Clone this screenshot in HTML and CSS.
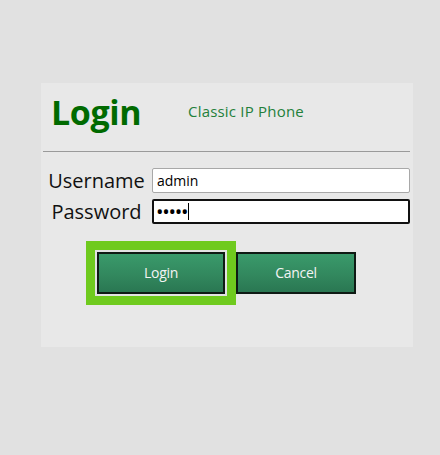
FILE: index.html
```html
<!DOCTYPE html>
<html>
<head>
<meta charset="utf-8">
<link rel="stylesheet" href="styles.css">
</head>
<body>
<div class="panel">
  <div class="head">
    <h1 class="title">Login</h1>
    <span class="sub">Classic IP Phone</span>
  </div>
  <hr class="rule">
  <div class="form">
    <label class="lbl" for="u">Username</label>
    <input class="field" id="u" type="text" value="admin">
    <label class="lbl" for="p">Password</label>
    <div class="field field-focus"><span class="dots">&#8226;&#8226;&#8226;&#8226;&#8226;</span><span class="caret"></span></div>
  </div>
  <div class="actions">
    <button class="btn btn-focus">Login</button>
    <button class="btn">Cancel</button>
  </div>
</div>
</body>
</html>
```
FILE: styles.css
```css
html, body {
  margin: 0;
  padding: 0;
  background: #e1e1e1;
  width: 440px;
  height: 455px;
  overflow: hidden;
}
.panel {
  margin: 83px 0 0 41px;
  width: 372px;
  height: 264px;
  background: #e8e8e8;
  box-sizing: border-box;
  font-family: "Open Sans", "Noto Sans", sans-serif;
}
.head {
  display: flex;
  align-items: flex-start;
  padding: 6px 0 0 10px;
  height: 60px;
  box-sizing: border-box;
}
.title {
  margin: 0;
  font-size: 34px;
  font-weight: 700;
  color: #006a00;
  letter-spacing: -0.4px;
  width: 137px;
  line-height: 46px;
}
.sub {
  font-size: 15px;
  line-height: 20px;
  margin-top: 12px;
  color: #23803a;
  letter-spacing: 0.2px;
}
.rule {
  margin: 8px 3px 0 2px;
  border: 0;
  border-top: 1px solid #9a9a9a;
  height: 0;
}
.form {
  display: grid;
  grid-template-columns: 103px 258px;
  column-gap: 4px;
  grid-auto-rows: 25px;
  row-gap: 6px;
  align-items: center;
  margin-top: 16px;
  padding-left: 4px;
}
.lbl {
  text-align: center;
  font-size: 20px;
  color: #111;
  line-height: 25px;
}
.field {
  box-sizing: border-box;
  width: 258px;
  height: 25px;
  margin: 0;
  border: 1px solid #a8a8a8;
  border-radius: 2px;
  background: #fff;
  font-family: "Open Sans", "Noto Sans", sans-serif;
  font-size: 14px;
  padding: 0 0 0 4px;
  color: #000;
  outline: none;
}
.field-focus {
  border: 2px solid #111;
  display: flex;
  align-items: center;
  padding-left: 2px;
}
.dots {
  font-size: 20px;
  letter-spacing: -1.3px;
  line-height: 1;
}
.caret {
  display: inline-block;
  width: 1px;
  height: 17px;
  background: #000;
  margin-left: 1px;
}
.actions {
  display: flex;
  gap: 11px;
  margin: 28px 0 0 56px;
}
.btn {
  box-sizing: border-box;
  height: 42px;
  width: 128px;
  border: 2px solid #0f1a14;
  background: linear-gradient(#3a9a6b, #32885e 55%, #2a7752);
  color: #f4f4f4;
  font-family: "Open Sans", "Noto Sans", sans-serif;
  font-size: 14px;
  padding: 0 0 2px;
  letter-spacing: -0.3px;
}
.btn-focus {
  box-shadow: 0 0 0 2px #e2e2e2, 0 0 0 11px #6fca1e;
}
.btn + .btn {
  width: 120px;
}
```
